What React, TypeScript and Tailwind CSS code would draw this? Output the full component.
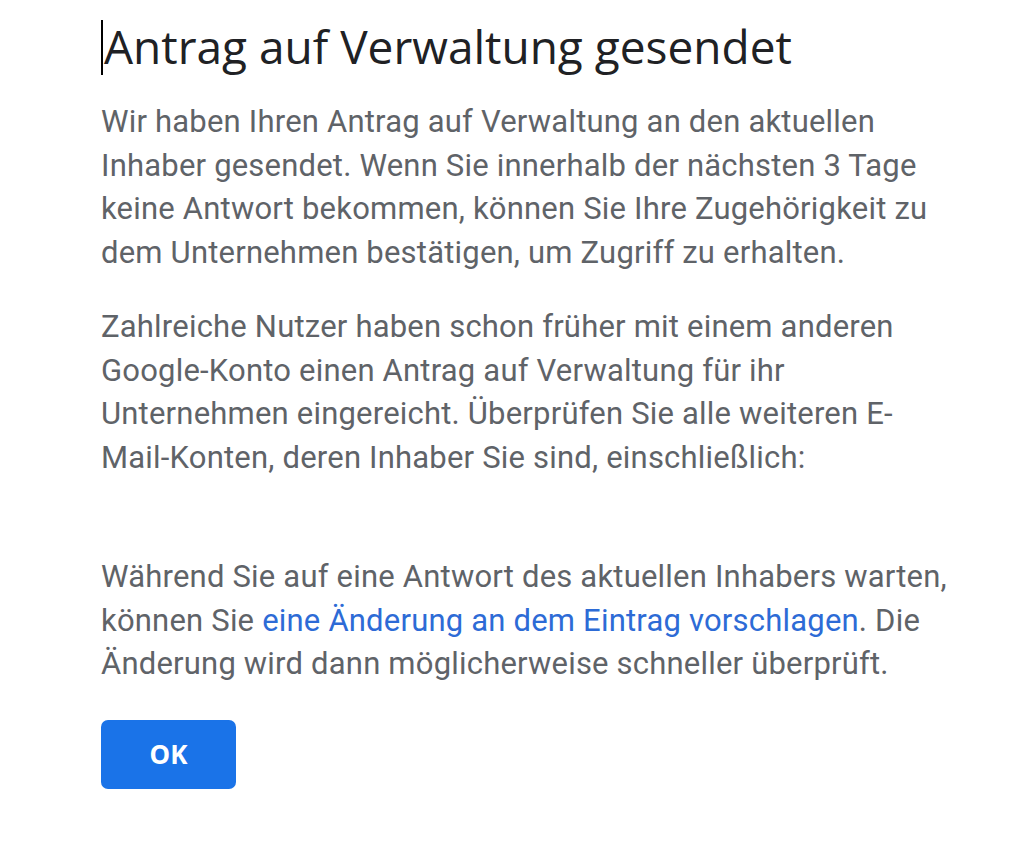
export default function App() {
  return (
    <div className="min-h-[864px] w-[1010px] bg-white">
      <div className="pl-[101px] pt-[16px]">
        <div className="flex items-start">
          <span className="mt-[4px] h-[55px] w-[2px] bg-black" />
          <h1
            className="ml-[1px] text-[46px] leading-[60px] text-[#202124]"
            style={{ fontFamily: '"Open Sans", sans-serif' }}
          >
            Antrag auf Verwaltung gesendet
          </h1>
        </div>
        <div
          className="mt-[24px] w-[852px] text-[31px] leading-[43.5px] tracking-[0.2px] text-[#5f6368]"
          style={{ fontFamily: "Roboto, sans-serif" }}
        >
          <p>
            Wir haben Ihren Antrag auf Verwaltung an den aktuellen Inhaber gesendet. Wenn Sie innerhalb der nächsten 3 Tage
            keine Antwort bekommen, können Sie Ihre Zugehörigkeit zu dem Unternehmen bestätigen, um Zugriff zu erhalten.
          </p>
          <p className="mt-[31px]">
            Zahlreiche Nutzer haben schon früher mit einem anderen Google-Konto einen Antrag auf Verwaltung für ihr
            Unternehmen eingereicht. Überprüfen Sie alle weiteren E-Mail-Konten, deren Inhaber Sie sind, einschließlich:
          </p>
          <ul className="h-[76px]" />
          <p>
            Während Sie auf eine Antwort des aktuellen Inhabers warten, können Sie{" "}
            <a className="text-[#2d6bd6]">eine Änderung an dem Eintrag vorschlagen</a>. Die Änderung wird dann
            möglicherweise schneller überprüft.
          </p>
        </div>
        <button className="mt-[34px] flex h-[69px] w-[135px] items-center justify-center rounded-[7px] bg-[#1a73e8] text-[26px] font-bold text-white">
          OK
        </button>
      </div>
    </div>
  );
}
